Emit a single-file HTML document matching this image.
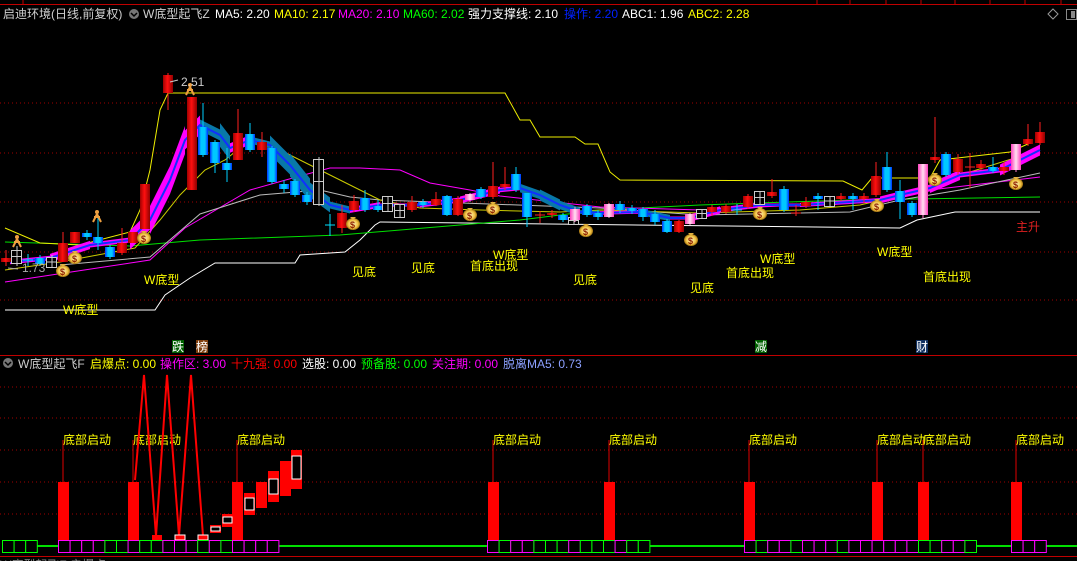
<!DOCTYPE html>
<html><head><meta charset="utf-8">
<style>
html,body{margin:0;padding:0;background:#000;width:1077px;height:561px;overflow:hidden}
svg{display:block}
text{font-family:"Liberation Sans","Noto Sans CJK SC",sans-serif;font-size:12px}
</style></head>
<body>
<svg id="s" width="1077" height="561" xmlns="http://www.w3.org/2000/svg">
<defs>
<linearGradient id="gr" x1="0" x2="1"><stop offset="0" stop-color="#a00000"/><stop offset=".45" stop-color="#ff1010"/><stop offset="1" stop-color="#900000"/></linearGradient>
<linearGradient id="gb" x1="0" x2="1"><stop offset="0" stop-color="#0030ff"/><stop offset=".3" stop-color="#00c8ff"/><stop offset=".7" stop-color="#00c8ff"/><stop offset="1" stop-color="#0030ff"/></linearGradient>
<linearGradient id="gp" x1="0" x2="1"><stop offset="0" stop-color="#ff40c0"/><stop offset=".5" stop-color="#ffe0f0"/><stop offset="1" stop-color="#ff40c0"/></linearGradient>
<radialGradient id="gm"><stop offset="0" stop-color="#fff8c0"/><stop offset=".7" stop-color="#f0c040"/><stop offset="1" stop-color="#a07010"/></radialGradient>
</defs>
<g id="g"></g>
</svg>
<script>
var g=document.getElementById('g'),h='';
function L(x1,y1,x2,y2,c,w,d){h+='<line x1="'+x1+'" y1="'+y1+'" x2="'+x2+'" y2="'+y2+'" stroke="'+c+'" stroke-width="'+(w||1)+'"'+(d?' stroke-dasharray="'+d+'"':'')+'/>';}
function R(x,y,w,hh,f,s){h+='<rect x="'+x+'" y="'+y+'" width="'+w+'" height="'+hh+'" fill="'+f+'"'+(s?' stroke="'+s+'"':'')+'/>';}
function P(pts,c,w){h+='<polyline points="'+pts+'" fill="none" stroke="'+c+'" stroke-width="'+(w||1)+'"/>';}
function T(x,y,t,c,sz){h+='<text x="'+x+'" y="'+y+'" fill="'+c+'"'+(sz?' style="font-size:'+sz+'px"':'')+'>'+t+'</text>';}
L(0,4.5,1077,4.5,'#c00000');L(23,0,23,4,'#c00000');
[817,850,886,921,955,990,1025,1061].forEach(function(x){L(x,0,x,4,'#c00000')});
[103,153,202,252,300].forEach(function(y){L(0,y,1077,y,'#a00000',1,'1 3')});
[387,418,450,482,514].forEach(function(y){L(0,y,1077,y,'#a00000',1,'1 3')});
L(0,355.5,1077,355.5,'#c00000');L(0,556.5,1077,556.5,'#c00000');
var hx=[[3,'启迪环境(日线,前复权)','#d0d0d0'],[143,'W底型起飞Z','#d0d0d0'],[215,'MA5: 2.20','#fff'],[274,'MA10: 2.17','#ff0'],[338,'MA20: 2.10','#f0f'],[403,'MA60: 2.02','#0f0'],[468,'强力支撑线: 2.10','#fff'],[564,'操作: 2.20','#0020ff'],[622,'ABC1: 1.96','#fff'],[688,'ABC2: 2.28','#ff0']];
hx.forEach(function(a){T(a[0],18,a[1],a[2])});
h+='<circle cx="134" cy="14" r="5" fill="#777"/><path d="M131 13l3 3 3-3" stroke="#000" fill="none" stroke-width="1.5"/>';
h+='<path d="M1053 9l5 5-5 5-5-5z" fill="none" stroke="#999"/>';R(1066.5,9.5,10,10,'none','#888');R(1071,11,4,7,'#888');
P('5,310 155,310 165,295 190,278 215,263 295,263 300,255 345,252 360,240 375,225 380,222 900,228 917,220 955,212 1040,212','#fff');
P('5,242 130,246 200,240 340,235 460,225 520,220 600,210 700,205 850,200 1040,197','#00e000');
P('5,282 150,260 185,228 250,190 300,176 330,168 360,168 400,170 430,183 470,190 500,196 600,207 700,210 800,205 880,202 930,190 1040,177','#f0f');
P('60,265 150,257 200,214 260,195 320,190 350,197 380,200 600,208 700,215 850,212 900,200 960,190 1040,173','#bbb');
P('5,228 40,243 80,245 130,232 140,210 150,170 160,110 168,93 505,93 520,120 530,120 540,137 575,137 585,144 598,144 610,172 620,180 843,181 862,190 872,178 930,178 940,160 1010,152 1030,143','#ee0');
P('5,270 60,262 135,248 160,220 180,195 205,170 225,160 250,140 280,150 320,170 350,185 380,200 420,208 480,210 560,212 600,210 700,213 800,210 860,205 890,198 930,185 970,172 1040,150','#cc0');
var bl=[[10,262],[50,258],[90,245],[130,240],[150,220],[170,180],[185,140],[200,125],[220,135],[230,148],[250,140],[270,145],[290,165],[310,190],[330,205],[350,210],[380,205],[420,205],[460,200],[500,190],[520,188],[540,195],[560,205],[580,212],[600,213],[640,212],[670,218],[690,218],[720,210],[760,205],[800,205],[850,202],[880,200],[900,195],[930,188],[960,175],[1000,170],[1040,150]];
for(var i=0;i<bl.length-1;i++){var a=bl[i],b=bl[i+1],s=(b[1]-a[1])/(b[0]-a[0]),w=Math.min(14,1.5+Math.abs(s)*8);var c=s<=0?'#f0f':'#0878a8';
h+='<polygon points="'+a[0]+','+(a[1]-w)+' '+b[0]+','+(b[1]-w)+' '+b[0]+','+(b[1]+w)+' '+a[0]+','+(a[1]+w)+'" fill="'+c+'"/>';}
P(bl.join(' '),'#1030ff',2);
var cs=[[6,258,262,250,266,'r'],[17,250,263,246,266,'w'],[28,259,261,254,266,'c'],[40,258,264,255,266,'b'],[52,257,267,255,268,'w'],[63,243,262,232,262,'r'],[75,232,243,232,243,'r'],[87,233,237,230,240,'b'],[98,237,243,217,250,'b'],[110,247,257,245,259,'b'],[122,243,253,228,255,'r'],[133,232,243,232,243,'r'],[145,184,229,184,229,'r'],[168,75,93,73,110,'r'],[192,97,190,97,190,'r'],[203,127,155,103,157,'b'],[215,142,163,140,173,'b'],[227,163,170,148,182,'b'],[238,133,160,109,160,'r'],[250,134,150,123,152,'b'],[262,142,150,132,157,'r'],[272,148,182,146,184,'b'],[284,184,189,180,193,'b'],[295,181,195,179,197,'b'],[307,195,202,192,205,'b'],[319,159,204,157,206,'w'],[330,224,226,214,236,'c'],[342,213,228,205,233,'r'],[354,201,210,195,212,'r'],[365,198,210,190,212,'b'],[378,206,210,200,212,'b'],[388,196,211,196,211,'w'],[400,204,217,204,217,'w'],[412,202,210,196,212,'r'],[423,202,205,199,208,'b'],[436,199,205,192,206,'r'],[447,196,215,195,216,'b'],[458,199,215,196,216,'r'],[470,194,200,193,202,'p'],[481,189,197,187,199,'b'],[493,186,197,162,199,'r'],[505,184,187,167,190,'r'],[516,174,190,167,192,'b'],[527,193,217,193,227,'b'],[540,214,216,211,223,'x'],[552,213,215,210,218,'r'],[563,215,220,213,222,'b'],[563,215,220,213,222,'b'],[574,217,224,217,224,'w'],[575,209,220,207,222,'p'],[587,206,215,204,217,'b'],[598,213,217,210,220,'b'],[609,204,217,203,218,'p'],[620,204,210,201,213,'b'],[632,208,211,205,214,'b'],[643,209,217,207,221,'b'],[655,214,222,210,225,'b'],[667,221,232,219,233,'b'],[679,221,232,220,233,'r'],[690,214,224,213,225,'p'],[702,209,218,209,218,'w'],[712,207,212,205,216,'r'],[726,206,212,204,214,'r'],[737,209,211,204,215,'c'],[748,196,207,194,209,'r'],[760,191,204,191,204,'w'],[772,192,196,179,198,'r'],[784,189,210,186,212,'b'],[796,212,214,205,216,'x'],[806,202,206,197,208,'r'],[818,196,199,193,210,'b'],[830,196,206,196,206,'w'],[841,196,199,193,201,'r'],[853,196,199,193,210,'b'],[864,196,199,193,203,'r'],[876,176,195,162,197,'r'],[887,167,190,152,192,'b'],[900,191,202,180,219,'b'],[912,203,215,201,217,'b'],[923,164,215,164,218,'p'],[935,157,160,117,163,'r'],[946,154,175,152,177,'b'],[958,159,172,154,175,'r'],[970,166,168,153,188,'x'],[981,164,168,160,170,'r'],[993,167,171,157,173,'b'],[1004,167,171,162,175,'r'],[1016,144,170,144,172,'p'],[1028,139,144,124,146,'r'],[1040,132,143,122,145,'r']];
cs.forEach(function(c){var x=c[0],t=c[1],b=c[2],col={r:'#ff2020',b:'#00d0ff',p:'#ff80d0',w:'#ccc',c:'#00e0ff',x:'#ff2020'}[c[5]];
L(x,c[3],x,c[4],col);
if(c[5]=='c'||c[5]=='x'){L(x-5,t+1,x+5,t+1,col);return;}
if(c[5]=='w'){R(x-5.5,t+.5,10,b-t,'#000','#ccc');L(x,t,x,b,'#ccc');L(x-5,(t+b)/2,x+5,(t+b)/2,'#ccc');return;}
R(x-5,t,10,Math.max(2,b-t),'url(#g'+c[5]+')');});
[[63,270],[75,257],[144,237],[353,223],[470,214],[493,208],[586,230],[691,239],[760,213],[877,205],[935,179],[1016,183]].forEach(function(p){
h+='<ellipse cx="'+p[0]+'" cy="'+(p[1]+1)+'" rx="7" ry="6" fill="url(#gm)"/><path d="M'+(p[0]-3)+' '+(p[1]-6)+'h6l-2 2h-2z" fill="#e0b040"/>';
h+='<text x="'+(p[0]-3)+'" y="'+(p[1]+5)+'" fill="#902000" style="font-size:9px;font-weight:bold">$</text>';});
[[17,243],[97,218],[190,91]].forEach(function(p){h+='<circle cx="'+p[0]+'" cy="'+(p[1]-6)+'" r="2" fill="#f0a040"/><path d="M'+p[0]+' '+(p[1]-4)+'l-4 8M'+p[0]+' '+(p[1]-4)+'l4 8M'+(p[0]-3)+' '+(p[1]-1)+'h6" stroke="#f0a040" stroke-width="2"/>';});
T(181,86,'2.51','#ccc');L(170,82,178,80,'#ccc');T(22,272,'1.73','#aaa');L(8,268,18,269,'#aaa');
[[63,314,'W底型'],[144,284,'W底型'],[352,276,'见底'],[411,272,'见底'],[493,259,'W底型'],[470,270,'首底出现'],[573,284,'见底'],[690,292,'见底'],[760,263,'W底型'],[726,277,'首底出现'],[877,256,'W底型'],[923,281,'首底出现']].forEach(function(a){T(a[0],a[1],a[2],'#ff0')});
T(1016,231,'主升','#e02020');
[[172,'跌','#006000'],[196,'榜','#804010'],[755,'减','#006000'],[916,'财','#103060']].forEach(function(a){R(a[0],340,12,13,a[2]);T(a[0],351,a[1],'#fff')});
h+='<circle cx="8" cy="363" r="5" fill="#777"/><path d="M5 362l3 3 3-3" stroke="#000" fill="none" stroke-width="1.5"/>';
[[18,'W底型起飞F','#ccc'],[90,'启爆点: 0.00','#ff0'],[160,'操作区: 3.00','#f0f'],[231,'十九强: 0.00','#f00'],[302,'选股: 0.00','#fff'],[361,'预备股: 0.00','#0f0'],[432,'关注期: 0.00','#f0f'],[503,'脱离MA5: 0.73','#8ca0ff']].forEach(function(a){T(a[0],368,a[1],a[2])});
P('2,546 1077,546','#00e000',2);
[58,128,232,488,604,744,872,918,1011].forEach(function(x){R(x,482,11,58,'#ff0000');L(x+5,440,x+5,482,'#e00000');T(x+5,444,'底部启动','#ff0')});
P('135,480 144,375 156,536 167,375 179,536 191,375 203,536','#ff0000',2);
R(152,535,10,5,'#f00');R(175,535,10,5,'#f00','#fff');R(198,535,10,5,'#f00','#fff');
[[210,525,533,527,531],[222,514,527,517,523],[244,493,515,498,510],[256,482,508,0,0],[268,471,502,479,494],[280,461,496,0,0],[291,450,489,456,479]].forEach(function(a){R(a[0],a[1],11,a[2]-a[1],'#f00');if(a[3])R(a[0]+1,a[3],9,a[4]-a[3],'#000','#fff');});
function boxes(x0,x1,pat){var n=Math.round((x1-x0)/11.6);for(var i=0;i<n;i++){var c=pat[i%pat.length]=='m'?'#f0f':'#0f0';R(x0+i*11.6+.5,540.5,11.6,12,'#000',c);}}
boxes(2,35,'g');boxes(58,279,'mmmmggmggmmmgmgmmmm');boxes(487,651,'mgmmgggmgggmgg');boxes(744,979,'mgmmgmmmgmmmmmmggmmggg');boxes(1011,1046,'m');
T(0,569,'W底型起飞F 启爆点','#888');
g.innerHTML=h;
</script>
</body></html>
